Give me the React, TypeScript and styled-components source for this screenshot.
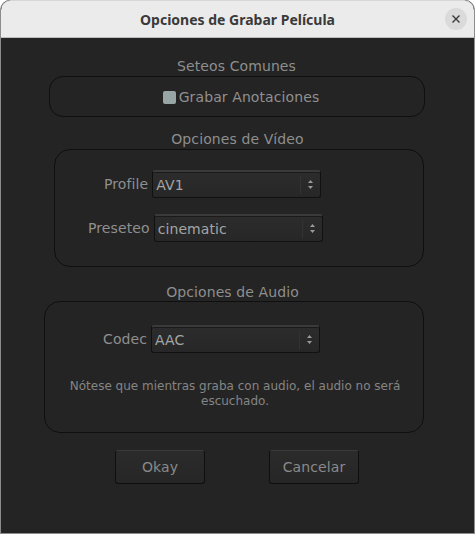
import React from "react";
import styled, { createGlobalStyle } from "styled-components";

const Global = createGlobalStyle`
  html, body { margin: 0; padding: 0; background: #ffffff; }
  body { width: 475px; height: 534px; overflow: hidden; }
  * { box-sizing: border-box; }
`;

const Window = styled.div`
  width: 475px;
  height: 534px;
  display: flex;
  flex-direction: column;
  border-radius: 10px 10px 0 0;
  overflow: hidden;
  background: #242424;
  border: 1px solid #8c8c8c;
  border-top: none;
`;

const TitleBar = styled.div`
  position: relative;
  height: 38px;
  flex: none;
  display: flex;
  align-items: center;
  justify-content: center;
  background: #ebebeb;
  border-bottom: 1px solid #bdbdbd;
  border-top: 1px solid #d6d6d6;
  border-radius: 10px 10px 0 0;
`;

const Title = styled.div`
  font-family: "Noto Sans", "DejaVu Sans", sans-serif;
  font-weight: 700;
  font-size: 14px;
  color: #3a3a3a;
`;

const CloseBtn = styled.div`
  position: absolute;
  right: 7px;
  top: 7px;
  width: 22px;
  height: 22px;
  border-radius: 50%;
  background: #dadada;
  display: flex;
  align-items: center;
  justify-content: center;
`;

const Body = styled.div`
  flex: 1;
  display: flex;
  flex-direction: column;
  font-family: "DejaVu Sans", sans-serif;
  font-size: 14px;
  letter-spacing: 0.1px;
  color: #8e8e8e;
`;

const SectionTitle = styled.div<{ $top: number; $shift: number }>`
  margin-top: ${(p) => p.$top}px;
  text-align: center;
  height: 17px;
  line-height: 17px;
  padding-left: ${(p) => Math.max(0, p.$shift * 2)}px;
  padding-right: ${(p) => Math.max(0, -p.$shift * 2)}px;
`;

const Group = styled.div<{ $top: number; $left: number; $right: number; $height: number; $radius: number }>`
  margin: ${(p) => p.$top}px ${(p) => p.$right}px 0 ${(p) => p.$left}px;
  height: ${(p) => p.$height}px;
  border: 1px solid #0f0f0f;
  border-radius: ${(p) => p.$radius}px;
  display: flex;
  flex-direction: column;
`;

const CheckRow = styled.label`
  display: flex;
  align-items: center;
  justify-content: center;
  gap: 3px;
  margin-top: 12px;
  padding-left: 8px;
  color: #909090;
`;

const CheckBox = styled.span`
  width: 13px;
  height: 13px;
  border-radius: 2px;
  background: #98a5a5;
`;

const FormRow = styled.div<{ $top: number; $labelWidth: number }>`
  display: flex;
  align-items: center;
  margin-top: ${(p) => p.$top}px;
  padding-left: ${(p) => p.$labelWidth}px;
`;

const Label = styled.span`
  color: #8f8f8f;
  margin-right: 4px;
`;

const Combo = styled.div`
  width: 169px;
  height: 28px;
  border: 1px solid #111111;
  border-top: 2px solid #3a3a3a;
  border-radius: 3px;
  background: linear-gradient(#2c2c2c, #272727);
  box-shadow: 0 1px 0 #1a1a1a inset;
  display: flex;
  align-items: center;
  padding-left: 3px;
  color: #a4a4a4;
`;

const ComboText = styled.span`
  flex: 1;
`;

const ComboSep = styled.span`
  width: 1px;
  height: 18px;
  background: #111111;
  border-right: 1px solid #333;
`;

const Arrows = styled.span`
  width: 19px;
  display: flex;
  justify-content: center;
`;

const Note = styled.div`
  margin-top: 26px;
  text-align: center;
  font-size: 12px;
  line-height: 15px;
  letter-spacing: 0;
  color: #858585;
  padding: 0 16px 0 18px;
`;

const Buttons = styled.div`
  display: flex;
  margin-top: 17px;
  padding-left: 114px;
  gap: 64px;
`;

const Button = styled.button`
  width: 90px;
  height: 34px;
  border: 1px solid #0f0f0f;
  border-top-color: #3a3a3a;
  border-radius: 3px;
  background: linear-gradient(#2b2b2b, #262626);
  font-family: "DejaVu Sans", sans-serif;
  font-size: 14px;
  letter-spacing: 0.1px;
  color: #8a8a8a;
  padding: 0;
`;

const ArrowIcon = () => (
  <svg width="7" height="11" viewBox="0 0 7 11">
    <path d="M3.5 1 L6 4 L1 4 Z" fill="#9a9a9a" />
    <path d="M3.5 10 L6 7 L1 7 Z" fill="#9a9a9a" />
  </svg>
);

const ComboBox = ({ value }: { value: string }) => (
  <Combo>
    <ComboText>{value}</ComboText>
    <ComboSep />
    <Arrows>
      <ArrowIcon />
    </Arrows>
  </Combo>
);

export default function App() {
  return (
    <>
      <Global />
      <Window>
        <TitleBar>
          <Title>Opciones de Grabar Película</Title>
          <CloseBtn>
            <svg width="10" height="10" viewBox="0 0 10 10">
              <path d="M1.5 1.5 L8.5 8.5 M8.5 1.5 L1.5 8.5" stroke="#3a3a3a" strokeWidth="1.4" />
            </svg>
          </CloseBtn>
        </TitleBar>
        <Body>
          <SectionTitle $top={20} $shift={-1}>Seteos Comunes</SectionTitle>
          <Group $top={1} $left={48} $right={49} $height={41} $radius={14}>
            <CheckRow>
              <CheckBox />
              Grabar Anotaciones
            </CheckRow>
          </Group>
          <SectionTitle $top={14} $shift={0}>Opciones de Vídeo</SectionTitle>
          <Group $top={1} $left={53} $right={50} $height={118} $radius={16}>
            <FormRow $top={20} $labelWidth={49}>
              <Label>Profile</Label>
              <ComboBox value="AV1" />
            </FormRow>
            <FormRow $top={16} $labelWidth={33}>
              <Label>Preseteo</Label>
              <ComboBox value="cinematic" />
            </FormRow>
          </Group>
          <SectionTitle $top={17} $shift={-5}>Opciones de Audio</SectionTitle>
          <Group $top={0} $left={43} $right={50} $height={132} $radius={16}>
            <FormRow $top={23} $labelWidth={58}>
              <Label>Codec</Label>
              <ComboBox value="AAC" />
            </FormRow>
            <Note>
              Nótese que mientras graba con audio, el audio no será
              <br />
              escuchado.
            </Note>
          </Group>
          <Buttons>
            <Button>Okay</Button>
            <Button>Cancelar</Button>
          </Buttons>
        </Body>
      </Window>
    </>
  );
}
